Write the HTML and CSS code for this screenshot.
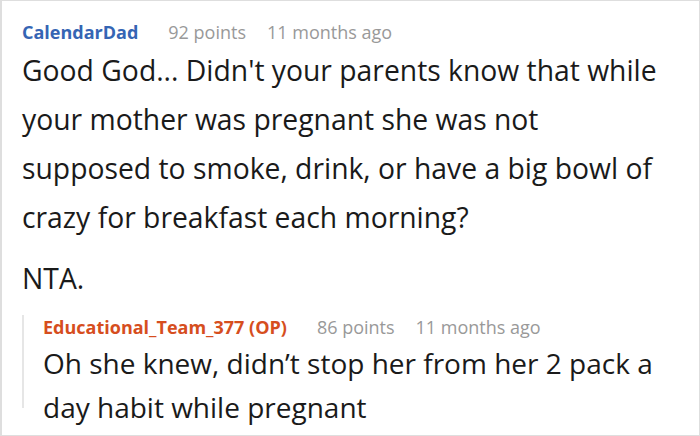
FILE: index.html
```html
<!DOCTYPE html>
<html>
<head>
<meta charset="utf-8">
<link rel="stylesheet" href="styles.css">
</head>
<body>
<div class="frame">
  <div class="comment">
    <div class="meta">
      <span class="author author-blue">CalendarDad</span>
      <span class="points">92 points</span>
      <span class="time">11 months ago</span>
    </div>
    <div class="body">
      <p>Good God... Didn't your parents know that while your mother was pregnant she was not supposed to smoke, drink, or have a big bowl of crazy for breakfast each morning?</p>
      <p class="nta">NTA.</p>
    </div>
  </div>
  <div class="reply">
    <div class="meta meta-reply">
      <span class="author author-op">Educational_Team_377 (OP)</span>
      <span class="points">86 points</span>
      <span class="time">11 months ago</span>
    </div>
    <div class="body body-reply">
      <p>Oh she knew, didn’t stop her from her 2 pack a day habit while pregnant</p>
    </div>
  </div>
</div>
</body>
</html>
```
FILE: styles.css
```css
html, body {
  margin: 0;
  padding: 0;
  background: #fff;
}
.frame {
  width: 700px;
  height: 436px;
  box-sizing: border-box;
  border: 1px solid #dedede;
  border-left-width: 2px;
  padding: 19px 0 0 20px;
  font-family: "Open Sans", "Noto Sans", sans-serif;
  color: #1a1a1a;
  overflow: hidden;
}
.meta {
  display: flex;
  align-items: baseline;
  font-size: 18px;
  line-height: 24px;
}
.author {
  font-weight: 700;
  margin-right: 30px;
}
.author-blue { color: #3565b4; }
.author-op {
  color: #d64e1e;
}
.points {
  color: #999;
  margin-right: 21px;
}
.time { color: #999; }
.body {
  font-size: 28.3px;
  line-height: 49px;
  margin-top: 2px;
  width: 640px;
}
.body p { margin: 0; }
.body p.nta { margin-top: 12px; }
.reply {
  margin-top: 12px;
  height: 93px;
  border-left: 2px solid #e6e6e6;
  padding-left: 19px;
}
.meta-reply {
  font-size: 18px;
}
.body-reply {
  font-size: 28px;
  line-height: 44px;
  margin-top: 2px;
  width: 630px;
}
```
